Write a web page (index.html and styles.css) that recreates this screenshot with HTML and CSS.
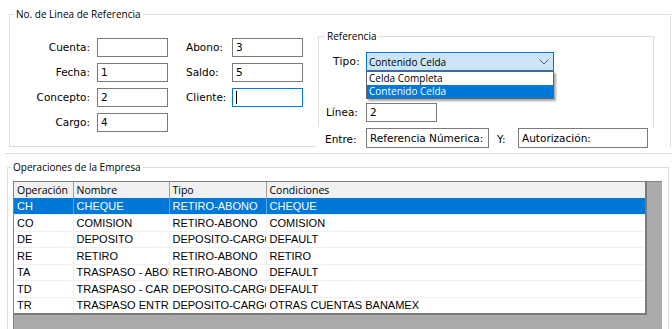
FILE: index.html
```html
<!DOCTYPE html>
<html lang="es">
<head>
  <meta charset="UTF-8">
  <title>Referencias</title>
  <link rel="stylesheet" href="styles.css">
</head>
<body>
  <div class="group group--top">
    <div class="legend">No. de Linea de Referencia</div>
    <div class="top-body">
      <div class="fields">
        <span class="lbl lbl--right">Cuenta:</span><div class="inp"></div>
        <span class="lbl lbl--pad">Abono:</span><div class="inp">3</div>
        <span class="lbl lbl--right">Fecha:</span><div class="inp">1</div>
        <span class="lbl lbl--pad">Saldo:</span><div class="inp">5</div>
        <span class="lbl lbl--right">Concepto:</span><div class="inp">2</div>
        <span class="lbl lbl--pad">Cliente:</span><div class="inp inp--focus"><span class="caret"></span></div>
        <span class="lbl lbl--right">Cargo:</span><div class="inp">4</div>
      </div>

      <div class="ref-col">
        <div class="group group--ref">
          <div class="legend legend--ref">Referencia</div>
          <div class="row row--tipo">
            <span class="lbl lbl--tipo">Tipo:</span>
            <div class="combo">
              <span>Contenido Celda</span>
              <svg class="combo__arrow" width="10" height="6" viewBox="0 0 10 6">
                <polyline points="0.5,0.5 5,5 9.5,0.5" fill="none" stroke="#606060" stroke-width="1"/>
              </svg>
              <ul class="drop">
                <li class="drop__item">Celda Completa</li>
                <li class="drop__item drop__item--sel">Contenido Celda</li>
              </ul>
            </div>
          </div>
          <div class="row row--linea">
            <span class="lbl lbl--linea">Línea:</span>
            <div class="inp">2</div>
          </div>
        </div>
        <div class="row row--entre">
          <span class="lbl lbl--entre">Entre:</span>
          <div class="inp inp--wide">Referencia Númerica:</div>
          <span class="lbl lbl--y">Y:</span>
          <div class="inp inp--auth">Autorización:</div>
        </div>
      </div>
    </div>
  </div>

  <div class="sep"></div>

  <div class="group group--ops">
    <div class="legend legend--ops">Operaciones de la Empresa</div>
    <div class="grid">
      <table class="table">
        <colgroup>
          <col style="width:59px">
          <col style="width:96px">
          <col style="width:97px">
          <col>
        </colgroup>
        <thead>
          <tr><th>Operación</th><th>Nombre</th><th>Tipo</th><th>Condiciones</th></tr>
        </thead>
        <tbody>
          <tr class="sel"><td>CH</td><td>CHEQUE</td><td>RETIRO-ABONO</td><td>CHEQUE</td></tr>
          <tr><td>CO</td><td>COMISION</td><td>RETIRO-ABONO</td><td>COMISION</td></tr>
          <tr><td>DE</td><td>DEPOSITO</td><td>DEPOSITO-CARGO</td><td>DEFAULT</td></tr>
          <tr><td>RE</td><td>RETIRO</td><td>RETIRO-ABONO</td><td>RETIRO</td></tr>
          <tr><td>TA</td><td>TRASPASO - ABONO</td><td>RETIRO-ABONO</td><td>DEFAULT</td></tr>
          <tr><td>TD</td><td>TRASPASO - CARGO</td><td>DEPOSITO-CARGO</td><td>DEFAULT</td></tr>
          <tr><td>TR</td><td>TRASPASO ENTRE CUENTAS</td><td>DEPOSITO-CARGO</td><td>OTRAS CUENTAS BANAMEX</td></tr>
        </tbody>
      </table>
    </div>
  </div>
</body>
</html>
```

FILE: styles.css
```css
* {
  box-sizing: border-box;
}

body {
  margin: 0;
  background-color: #fff;
  color: #000;
  overflow: hidden;
  font-family: "DejaVu Sans", Verdana, sans-serif;
  font-size: 10.5px;
}

.group {
  border: 1px solid #dcdcdc;
}

.legend {
  width: fit-content;
  height: 14px;
  margin: -8px 0 0 4px;
  padding: 0 2px;
  background-color: #fff;
  font-family: "Open Sans", sans-serif;
  font-size: 10px;
  line-height: 14px;
}

/* top block */
.group--top {
  width: 662px;
  height: 133px;
  margin: 14px 0 0 9px;
}

.top-body {
  display: flex;
  align-items: flex-start;
}

.fields {
  display: grid;
  grid-template-columns: 87px 71px 64px 71px;
  grid-auto-rows: 19px;
  row-gap: 6px;
  margin-top: 17px;
}

.lbl {
  line-height: 19px;
  white-space: nowrap;
}

.lbl--right {
  text-align: right;
  padding-right: 7px;
}

.lbl--pad {
  padding-left: 18px;
}

.inp {
  height: 19px;
  width: 71px;
  border: 1px solid #7a7a7a;
  padding: 0 3px;
  line-height: 17px;
  white-space: nowrap;
  overflow: hidden;
}

.inp--focus {
  border-color: #0078d7;
  position: relative;
}

.caret {
  position: absolute;
  left: 3px;
  top: 2px;
  width: 1px;
  height: 13px;
  background-color: #000;
}

.inp--wide {
  width: 123px;
  height: 20px;
  line-height: 18px;
}

.inp--auth {
  width: 130px;
  height: 20px;
  line-height: 18px;
}

/* Referencia */
.ref-col {
  width: 354px;
  margin: 15px 0 0 13px;
}

.group--ref {
  width: 336px;
  height: 91px;
  margin-left: 2px;
  border-bottom: none;
}

.legend--ref {
  margin-left: 6px;
}

.row {
  display: flex;
  align-items: center;
}

.row--tipo {
  margin-top: 9px;
}

.lbl--tipo {
  width: 47px;
  padding-left: 14px;
  letter-spacing: 0.3px;
}

.combo {
  position: relative;
  display: flex;
  align-items: center;
  justify-content: space-between;
  width: 188px;
  height: 19px;
  padding: 0 4px 0 2px;
  background-color: #cce4f7;
  border: 1px solid #0078d7;
  font-family: "Open Sans", sans-serif;
  font-size: 10px;
}

.drop {
  position: absolute;
  left: -1px;
  top: 18px;
  width: 188px;
  margin: 0;
  padding: 0;
  list-style: none;
  background-color: #fff;
  border: 1px solid #646464;
  box-shadow: 2px 2px 2px rgba(0, 0, 0, 0.35);
}

.drop__item {
  height: 13px;
  padding-left: 2px;
  line-height: 13px;
}

.drop__item--sel {
  background-color: #0078d7;
  color: #fff;
}

.row--linea {
  margin-top: 32px;
}

.lbl--linea {
  width: 47px;
  padding-left: 7px;
}

.row--entre {
  height: 22px;
  padding-top: 1px;
  align-items: flex-start;
  background-color: #fff;
}

.row--entre .lbl {
  line-height: 22px;
}

.lbl--entre {
  width: 50px;
  padding-left: 9px;
}

.lbl--y {
  width: 29px;
  padding-left: 8px;
}

.sep {
  width: 667px;
  margin: 6px 0 0 5px;
  border-top: 1px solid #dcdcdc;
}

/* Operaciones */
.group--ops {
  width: 662px;
  height: 162px;
  margin: 13px 0 0 7px;
  border-bottom: none;
}

.legend--ops {
  margin-left: 3px;
}

.grid {
  width: 649px;
  height: 148px;
  margin: 7px 0 0 5px;
  background-color: #ababab;
  border-top: 1px solid #828282;
  border-left: 1px solid #828282;
}

.table {
  width: 633px;
  table-layout: fixed;
  border-collapse: collapse;
  background-color: #fff;
  border-right: 2px solid #7a7a7a;
  border-bottom: 2px solid #7a7a7a;
  font-family: "Liberation Sans", Arial, sans-serif;
  font-size: 11px;
}

.table th,
.table td {
  padding: 0 0 0 3px;
  text-align: left;
  white-space: nowrap;
  overflow: hidden;
  text-overflow: clip;
}

.table th {
  height: 16px;
  background-color: #f0f0f0;
  border-right: 1px solid #a0a0a0;
  font-family: "Open Sans", sans-serif;
  font-size: 10.5px;
  font-weight: normal;
}

.table td {
  height: 16.5px;
  border-right: 1px solid #f0f0f0;
  border-bottom: 1px solid #f0f0f0;
}

.table .sel td {
  background-color: #0078d7;
  color: #fff;
  border-right-color: #5aa6e6;
}
```
